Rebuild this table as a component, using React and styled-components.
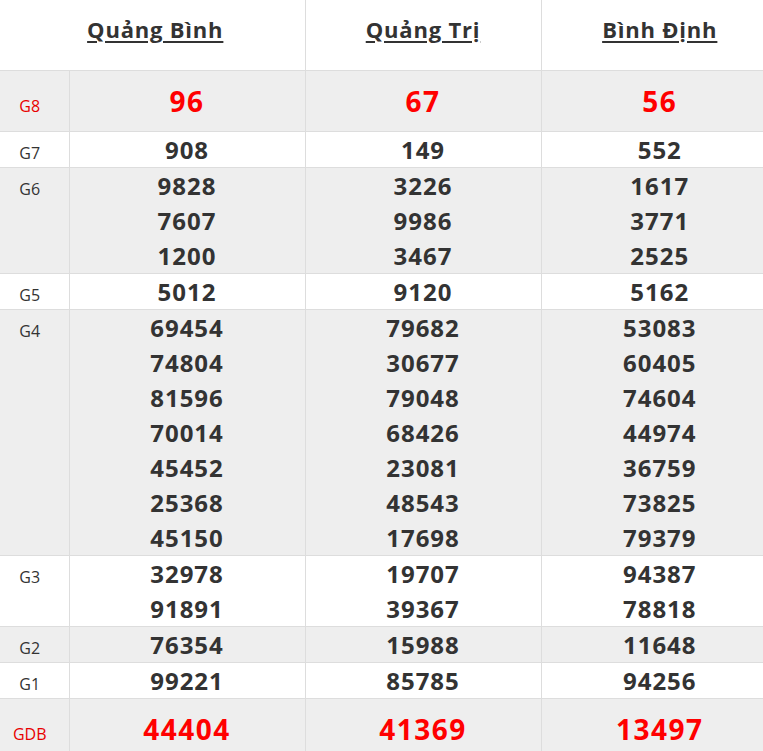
import React from "react";
import styled, { createGlobalStyle } from "styled-components";

const Global = createGlobalStyle`
  html, body { margin: 0; padding: 0; background: #fff; overflow: hidden; }
  body { font-family: "Open Sans", "Liberation Sans", sans-serif; color: #333; }
`;

const Table = styled.table`
  border-collapse: collapse;
  table-layout: fixed;
  width: 778px;
`;

const HeadCell = styled.th`
  height: 70px;
  box-sizing: border-box;
  padding: 14px 0 0 ${(p) => (p.$first ? "6px" : "0")};
  border-bottom: 1px solid #ddd;
  border-right: 1px solid #ddd;
  font-size: 22px;
  line-height: 30px;
  letter-spacing: 0.8px;
  font-weight: 700;
  color: #333;
  text-align: center;
  vertical-align: top;
  &:last-child { border-right: none; }
`;

const HeadLink = styled.span`
  text-decoration: underline;
  text-underline-offset: 3px;
  text-decoration-thickness: 2px;
`;

const Row = styled.tr`
  background: ${(p) => (p.$shade ? "#eeeeee" : "#ffffff")};
`;

const Label = styled.td`
  padding: ${(p) => (p.$big ? "13px 9px 12px 0" : "0 9px 0 0")};
  border-bottom: 1px solid #ddd;
  border-right: 1px solid #ddd;
  font-size: 16px;
  line-height: 20px;
  text-align: center;
  vertical-align: baseline;
  color: ${(p) => (p.$red ? "#e80000" : "#333")};
`;

const NumCell = styled.td`
  padding: ${(p) => (p.$big ? "13px 0 12px" : "0")};
  border-bottom: 1px solid #ddd;
  border-right: 1px solid #ddd;
  text-align: center;
  vertical-align: baseline;
  &:last-child { border-right: none; }
`;

const Num = styled.div`
  font-size: ${(p) => (p.$big ? "28px" : "24px")};
  letter-spacing: ${(p) => (p.$big ? "1.5px" : "1px")};
  line-height: 35px;
  font-weight: 700;
  color: ${(p) => (p.$big ? "#ff0000" : "#333")};
`;

const provinces = ["Quảng Bình", "Quảng Trị", "Bình Định"];

const rows = [
  { label: "G8", big: true, data: [["96"], ["67"], ["56"]] },
  { label: "G7", data: [["908"], ["149"], ["552"]] },
  {
    label: "G6",
    data: [
      ["9828", "7607", "1200"],
      ["3226", "9986", "3467"],
      ["1617", "3771", "2525"],
    ],
  },
  { label: "G5", data: [["5012"], ["9120"], ["5162"]] },
  {
    label: "G4",
    data: [
      ["69454", "74804", "81596", "70014", "45452", "25368", "45150"],
      ["79682", "30677", "79048", "68426", "23081", "48543", "17698"],
      ["53083", "60405", "74604", "44974", "36759", "73825", "79379"],
    ],
  },
  { label: "G3", data: [["32978", "91891"], ["19707", "39367"], ["94387", "78818"]] },
  { label: "G2", data: [["76354"], ["15988"], ["11648"]] },
  { label: "G1", data: [["99221"], ["85785"], ["94256"]] },
  { label: "GDB", big: true, data: [["44404"], ["41369"], ["13497"]] },
];

export default function App() {
  return (
    <>
      <Global />
      <Table>
        <colgroup>
          <col style={{ width: 69 }} />
          <col style={{ width: 236 }} />
          <col style={{ width: 236 }} />
          <col style={{ width: 237 }} />
        </colgroup>
        <thead>
          <tr>
            <HeadCell colSpan={2} $first>
              <HeadLink>{provinces[0]}</HeadLink>
            </HeadCell>
            <HeadCell>
              <HeadLink>{provinces[1]}</HeadLink>
            </HeadCell>
            <HeadCell>
              <HeadLink>{provinces[2]}</HeadLink>
            </HeadCell>
          </tr>
        </thead>
        <tbody>
          {rows.map((r, i) => (
            <Row key={r.label} $shade={i % 2 === 0}>
              <Label $big={r.big} $red={r.big}>
                {r.label}
              </Label>
              {r.data.map((col, j) => (
                <NumCell key={j} $big={r.big}>
                  {col.map((n, k) => (
                    <Num key={k} $big={r.big}>
                      {n}
                    </Num>
                  ))}
                </NumCell>
              ))}
            </Row>
          ))}
        </tbody>
      </Table>
    </>
  );
}
